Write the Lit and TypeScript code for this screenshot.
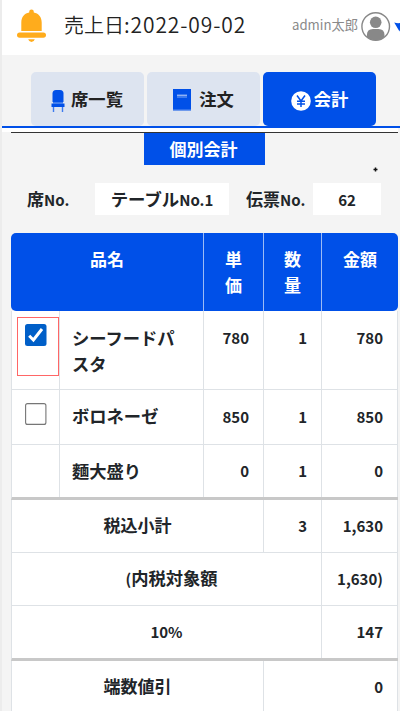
import { html, svg, LitElement, css } from "lit";
import { customElement, property } from "lit/decorators.js";
import { classMap } from "lit/directives/class-map.js";

// Latin letters and digits are set smaller than the Japanese glyphs.
function mixed(text: string) {
  return text
    .split(/([\x20-\x7e]+)/)
    .filter((part) => part)
    .map((part) =>
      /^[\x20-\x7e]/.test(part) ? html`<span class="latin">${part}</span>` : part
    );
}

interface Cell {
  text?: string;
  kind?: string;
  check?: boolean;
}

interface Row {
  layout: string;
  cells: Cell[];
}

const rows: Row[] = [
  {
    layout: "item tall",
    cells: [
      { kind: "check marked", check: true },
      { text: "シーフードパスタ", kind: "name" },
      { text: "780" },
      { text: "1" },
      { text: "780" },
    ],
  },
  {
    layout: "item medium",
    cells: [
      { kind: "check", check: false },
      { text: "ボロネーゼ", kind: "name" },
      { text: "850" },
      { text: "1" },
      { text: "850" },
    ],
  },
  {
    layout: "item thick",
    cells: [
      { kind: "check" },
      { text: "麵大盛り", kind: "name" },
      { text: "0" },
      { text: "1" },
      { text: "0" },
    ],
  },
  {
    layout: "subtotal",
    cells: [{ text: "税込小計", kind: "label" }, { text: "3" }, { text: "1,630" }],
  },
  {
    layout: "tax",
    cells: [{ text: "(内税対象額", kind: "label indent" }, { text: "1,630)" }],
  },
  {
    layout: "tax thick",
    cells: [{ text: "10%", kind: "label" }, { text: "147" }],
  },
  {
    layout: "discount",
    cells: [{ text: "端数値引", kind: "label" }, { text: "0" }],
  },
];

const icons = {
  chair: svg`<svg width="14" height="24" viewBox="0 0 14 24">
    <path d="M1.500 13V4.500q0-3.500 3.500-3.500h4q3.500 0 3.500 3.500V13z" fill="#0050e8" />
    <path d="M2 13h10v1.500H2z" fill="#3d7bee" />
    <path d="M.5 14.500h13V18H.5z" fill="#0050e8" />
    <path d="M1.800 18h1.400v5H1.800zM10.800 18h1.400v5h-1.400z" fill="#3d7bee" />
  </svg>`,
  book: svg`<svg width="18" height="22" viewBox="0 0 18 22">
    <path d="M0 0h18v21.500H0z" fill="#0050e8" />
    <path d="M4 5h10v4H4z" fill="#3d7bee" />
    <path d="M4 6.500h10" stroke="#8fb1f5" />
    <path d="M0 20.500h18" stroke="#2f70ec" />
  </svg>`,
  yen: svg`<svg width="20" height="20" viewBox="0 0 20 20">
    <circle cx="10" cy="10" r="9.800" fill="#fff" />
    <path d="M6 4.500l4 5.500 4-5.500M10 10v6M6 10.300h8M6 13h8" fill="none" stroke="#0050e8" stroke-width="1.500" />
  </svg>`,
};

@customElement("page-header")
class PageHeader extends LitElement {
  static styles = css`
    :host {
      display: flex;
      height: 55px;
      position: relative;
      background: white;
      overflow: hidden;
    }

    .bell {
      margin: 9px 0 0 15px;
      flex: none;
    }

    .date {
      margin-left: 17px;
      width: 185px;
      font-size: 20px;
      line-height: 49px;
      font-weight: 350;
      color: #222;
      white-space: nowrap;
    }

    .digits {
      font-size: 21px;
      letter-spacing: 0.9px;
    }

    .user {
      margin-left: 43px;
      width: 66px;
      font-size: 13.2px;
      line-height: 49px;
      color: #8a8a8a;
      white-space: nowrap;
    }

    .avatar {
      margin: 11px 0 0 3px;
      flex: none;
    }

    .caret {
      position: absolute;
      left: 391px;
      top: 21px;
    }
  `;

  render() {
    return html`
      <svg class="bell" width="30" height="34" viewBox="0 0 30 34">
        <path
          d="M4.3 22v-8.5C4.3 8 7.6 4.3 12.2 3.6V2.8a2.3 2.3 0 0 1 4.6 0v.8c4.6.7 7.9 4.4 7.9 9.9V22z"
          fill="#ffac1c"
        />
        <rect x="0" y="23.4" width="29" height="5.4" rx="2.7" fill="#ffac1c" />
        <path d="M11.2 30.3h6.6q-.8 2.7-3.3 2.7t-3.3-2.7z" fill="#ffac1c" />
      </svg>
      <div class="date">売上日<span class="digits">:2022-09-02</span></div>
      <div class="user">admin太郎</div>
      <svg class="avatar" width="30" height="31" viewBox="0 0 30 31">
        <circle cx="14.7" cy="15.5" r="13.8" fill="#fff" stroke="#888" stroke-width="1.4" />
        <circle cx="14.7" cy="11.3" r="5.8" fill="#888" />
        <path d="M5.9 26v-2q0-6 6-6h5.6q6 0 6 6v2q-3.8 3.3-8.8 3.3t-8.800-3.300z" fill="#888" />
      </svg>
      <svg class="caret" width="12" height="12" viewBox="0 0 12 12">
        <path d="M1.200 1.500q4 1.500 8 0L6.500 10.500z" fill="#0050e8" />
      </svg>
    `;
  }
}

@customElement("tab-button")
class TabButton extends LitElement {
  static styles = css`
    :host {
      display: block;
    }

    .tab {
      box-sizing: border-box;
      width: 113px;
      height: 54px;
      padding-right: 1px;
      display: flex;
      justify-content: center;
      align-items: center;
      gap: 6px;
      border-radius: 5px;
      background: #dde4f0;
      color: #222;
      font-size: 17.3px;
      font-weight: 700;
      white-space: nowrap;
    }

    .label {
      padding-bottom: 2px;
    }

    .book {
      gap: 8px;
      padding-right: 0;
    }

    .active {
      background: #0050e8;
      color: white;
      gap: 3px;
      padding-right: 0;
    }

    .icon {
      display: flex;
      padding-top: 4px;
    }

    .book .icon {
      padding-top: 2px;
    }
  `;

  @property() label = "";
  @property() icon: keyof typeof icons = "chair";
  @property({ type: Boolean }) active = false;

  render() {
    return html`
      <div class=${classMap({ tab: true, [this.icon]: true, active: this.active })}>
        <span class="icon">${icons[this.icon]}</span>
        <span class="label">${this.label}</span>
      </div>
    `;
  }
}

@customElement("bill-table")
class BillTable extends LitElement {
  static styles = css`
    :host {
      display: block;
      width: 387px;
      color: #212529;
      font-size: 17px;
      font-weight: 700;
      line-height: 26px;
    }

    .latin {
      font-size: 15px;
    }

    .row {
      display: grid;
      box-sizing: border-box;
      height: 53px;
      background: white;
      border-bottom: 1px solid #dee2e6;
      border-left: 1px solid #dee2e6;
    }

    .head {
      grid-template-columns: 193px 60px 58px 76px;
      height: 78px;
      background: #0050e8;
      border: 0;
      border-radius: 5px;
      color: white;
      overflow: hidden;
    }

    .item {
      grid-template-columns: 48px 144px 60px 58px 76px;
    }

    .subtotal {
      grid-template-columns: 252px 58px 76px;
    }

    .tax {
      grid-template-columns: 310px 76px;
    }

    .discount {
      grid-template-columns: 252px 134px;
      height: 60px;
    }

    .tall {
      height: 79px;
    }

    .medium {
      height: 55px;
    }

    .thick {
      height: 55px;
      border-bottom: 3px solid #c8c8c8;
    }

    .cell {
      box-sizing: border-box;
      padding: 12px 14px 0 12px;
      text-align: right;
      border-right: 1px solid #dee2e6;
    }

    .tall .cell,
    .medium .cell {
      padding-top: 13px;
    }

    .cell.name {
      padding: 13px 12px 0;
      text-align: left;
      font-size: 17.3px;
    }

    .tall .cell.name {
      padding: 14px 12px 0;
    }

    .label {
      text-align: center;
      padding: 12px 0 0;
    }

    .indent {
      padding-left: 10px;
      font-size: 17.3px;
    }

    .title {
      padding: 13px 20px 0;
      text-align: center;
      border-right: 1px solid #9cbbf5;
    }

    .title.wide {
      padding: 13px 0 0;
    }

    .title:last-child {
      border-right: 0;
    }

    .check {
      padding: 13px 0 0 13px;
      text-align: left;
      position: relative;
    }

    .box {
      display: block;
    }

    /* red frame drawn around the selected checkbox */
    .marked::after {
      content: "";
      position: absolute;
      left: 5px;
      top: 6px;
      width: 40px;
      height: 57px;
      border: 1px solid #f66;
    }
  `;

  checkbox(checked: boolean) {
    return checked
      ? html`<svg class="box" width="22" height="22" viewBox="0 0 22 22">
          <rect width="21.500" height="22" rx="2.500" fill="#005fc8" />
          <path d="M4.200 11.800l4.200 4.200 8.600-11" fill="none" stroke="#fff" stroke-width="3" />
        </svg>`
      : html`<svg class="box" width="22" height="22" viewBox="0 0 22 22">
          <rect x=".600" y=".600" width="20.300" height="20.800" rx="2" fill="#fff" stroke="#767676" stroke-width="1.100" />
        </svg>`;
  }

  render() {
    return html`
      <div class="row head">
        <div class="cell title wide">品名</div>
        <div class="cell title">単価</div>
        <div class="cell title">数量</div>
        <div class="cell title wide">金額</div>
      </div>
      ${rows.map(
        (row) => html`
          <div class="row ${row.layout}">
            ${row.cells.map(
              (cell) => html`<div class="cell ${cell.kind ?? ""}">${
                cell.check === undefined
                  ? mixed(cell.text ?? "")
                  : this.checkbox(cell.check)
              }</div>`
            )}
          </div>
        `
      )}
    `;
  }
}

@customElement("app-root")
class AppRoot extends LitElement {
  static styles = css`
    :host {
      display: block;
      box-sizing: border-box;
      width: 400px;
      height: 711px;
      overflow: hidden;
      position: relative;
      background: #f4f4f4;
      border-left: 2px solid #ececec;
      font-family: "Noto Sans CJK JP", sans-serif;
    }

    .tabs {
      display: flex;
      gap: 3px;
      padding: 17px 0 0 29px;
      border-bottom: 2px solid #0050e8;
    }

    .strip {
      height: 4px;
      margin-right: 2px;
      background: white;
    }

    .split {
      margin: 0 2px 0 9px;
      height: 32px;
      border-top: 1px solid #333;
      display: flex;
    }

    .split-button {
      box-sizing: border-box;
      width: 121px;
      padding-right: 2px;
      margin-left: 133px;
      background: #0050e8;
      color: white;
      font-size: 17px;
      font-weight: 700;
      line-height: 32px;
      text-align: center;
    }

    .info {
      display: grid;
      grid-template-columns: 68px 134px 17px 67px 68px;
      margin: 18px 0 18px 25px;
      height: 32px;
      line-height: 31px;
      color: #212529;
      font-size: 17px;
      font-weight: 700;
      white-space: nowrap;
    }

    .latin {
      font-size: 15px;
    }

    .value {
      background: white;
      text-align: center;
    }

    .table-name {
      font-size: 17.4px;
    }

    .slip {
      grid-column: 4;
    }

    .bill {
      margin-left: 9px;
    }

    .cursor {
      position: absolute;
      left: 371px;
      top: 167px;
    }
  `;

  render() {
    return html`
      <page-header></page-header>
      <div class="tabs">
        <tab-button icon="chair" label="席一覧"></tab-button>
        <tab-button icon="book" label="注文"></tab-button>
        <tab-button icon="yen" label="会計" active></tab-button>
      </div>
      <div class="strip"></div>
      <div class="split"><div class="split-button">個別会計</div></div>
      <div class="info">
        <div>${mixed("席No.")}</div>
        <div class="value table-name">${mixed("テーブルNo.1")}</div>
        <div class="slip">${mixed("伝票No.")}</div>
        <div class="value">${mixed("62")}</div>
      </div>
      <bill-table class="bill"></bill-table>
      <svg class="cursor" width="5" height="5" viewBox="0 0 5 5">
        <path d="M2.500 .500v4M.500 2.500h4" stroke="#111" stroke-width="1.500" />
      </svg>
    `;
  }
}
